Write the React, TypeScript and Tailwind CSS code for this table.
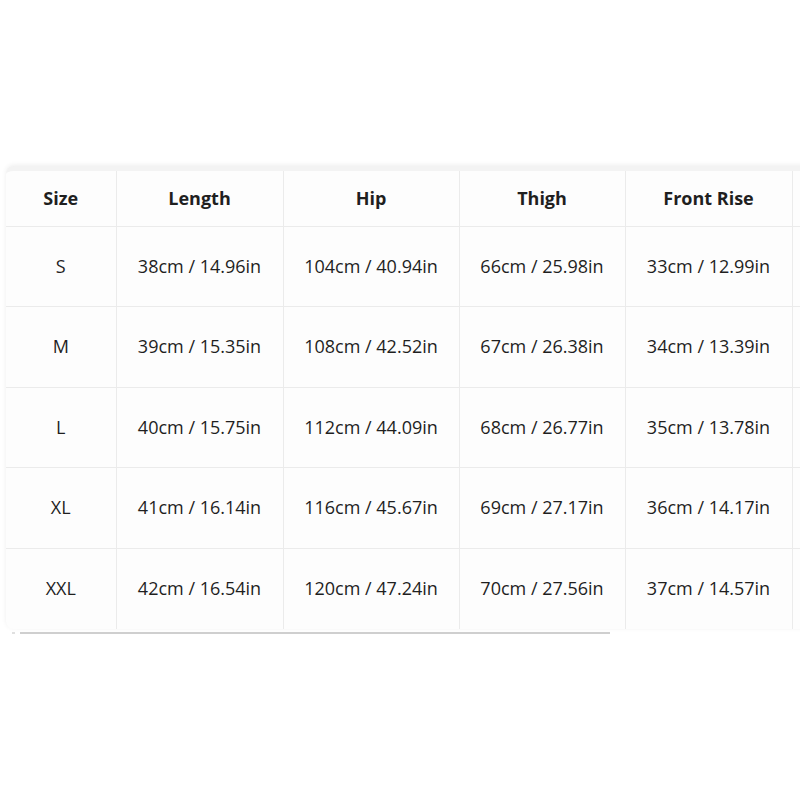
import React from "react";

const HEADERS = ["Size", "Length", "Hip", "Thigh", "Front Rise", ""];

const ROWS = [
  ["S", "38cm / 14.96in", "104cm / 40.94in", "66cm / 25.98in", "33cm / 12.99in", ""],
  ["M", "39cm / 15.35in", "108cm / 42.52in", "67cm / 26.38in", "34cm / 13.39in", ""],
  ["L", "40cm / 15.75in", "112cm / 44.09in", "68cm / 26.77in", "35cm / 13.78in", ""],
  ["XL", "41cm / 16.14in", "116cm / 45.67in", "69cm / 27.17in", "36cm / 14.17in", ""],
  ["XXL", "42cm / 16.54in", "120cm / 47.24in", "70cm / 27.56in", "37cm / 14.57in", ""],
];

// column widths measured off the chart; the last one runs past the window
const COLS = ["w-[110px]", "w-[167px]", "w-[176px]", "w-[166px]", "w-[167px]", "w-[40px]"];

export default function App() {
  return (
    <div
      className="w-[800px] h-[800px] bg-white overflow-hidden pt-[166px]"
      style={{ fontFamily: '"Open Sans", "Noto Sans", sans-serif' }}
    >
      <div className="ml-[6px] w-[840px]">
        <div className="rounded-lg bg-[#fdfdfd] shadow-[0_-1px_5px_rgba(0,0,0,0.07)] border-t-[5px] border-[#f3f3f3] overflow-hidden">
          <table className="border-collapse table-fixed text-[18px] text-[#1f1f1f]">
            <colgroup>
              {COLS.map((c, i) => (
                <col key={i} className={c} />
              ))}
            </colgroup>
            <thead>
              <tr className="h-[55px]">
                {HEADERS.map((h, i) => (
                  <th
                    key={i}
                    className={`font-bold text-center border-b border-[#ebebeb] ${i > 0 ? "border-l" : ""}`}
                  >
                    {h}
                  </th>
                ))}
              </tr>
            </thead>
            <tbody>
              {ROWS.map((row, r) => (
                <tr key={row[0]} className="h-[80.5px]">
                  {row.map((cell, i) => (
                    <td
                      key={i}
                      className={`text-center border-[#ebebeb] ${i > 0 ? "border-l" : ""} ${r < ROWS.length - 1 ? "border-b" : ""}`}
                    >
                      {cell}
                    </td>
                  ))}
                </tr>
              ))}
            </tbody>
          </table>
        </div>
      </div>

      {/* scrollbar track */}
      <div className="mt-[3px] flex items-center">
        <div className="ml-[12px] w-[3px] h-[2px] bg-[#e0e0e0]" />
        <div className="ml-[5px] w-[590px] h-[2px] bg-[#cfcfcf]" />
      </div>
    </div>
  );
}
